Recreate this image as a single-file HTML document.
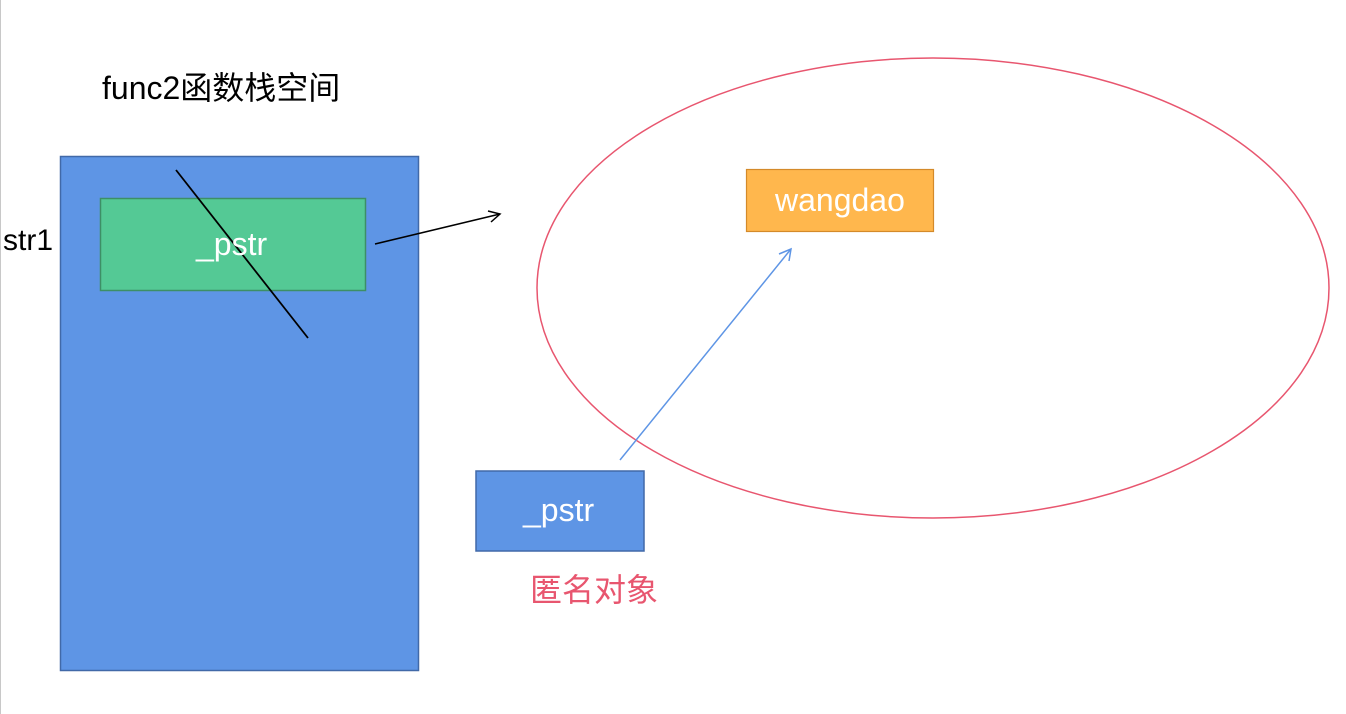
<!DOCTYPE html>
<html><head><meta charset="utf-8"><style>
body{margin:0;width:1346px;height:714px;background:#fff;overflow:hidden;position:relative;font-family:"Liberation Sans","Noto Sans CJK SC",sans-serif}
.t{position:absolute;white-space:nowrap}
</style></head><body>
<div style="position:absolute;left:0;top:0;width:1px;height:714px;background:#c8c8c8"></div>
<svg width="1346" height="714" style="position:absolute;left:0;top:0">
<rect x="60.5" y="156.5" width="358" height="514" fill="#5e95e5" stroke="#4169a8" stroke-width="1.5"/>
<rect x="100.5" y="198.5" width="265" height="92" fill="#54c995" stroke="#3d8f66" stroke-width="1.5"/>
<rect x="476" y="471" width="168" height="80" fill="#5e95e5" stroke="#4169a8" stroke-width="1.5"/>
<ellipse cx="933" cy="288" rx="396" ry="230" fill="none" stroke="#e8566f" stroke-width="1.5"/>
<rect x="746.5" y="169.5" width="187" height="62" fill="#ffb74d" stroke="#d48a2a" stroke-width="1.2"/>
<line x1="176" y1="170" x2="308" y2="338" stroke="#000" stroke-width="1.8"/>
<line x1="375" y1="244" x2="500" y2="214" stroke="#000" stroke-width="1.5"/>
<polyline points="488,211 500,214 491,222" fill="none" stroke="#000" stroke-width="1.5"/>
<line x1="620" y1="460" x2="791" y2="249" stroke="#5e95e5" stroke-width="1.5"/>
<polyline points="779,254 791,249 789,261" fill="none" stroke="#5e95e5" stroke-width="1.5"/>
</svg>
<div class="t" style="left:102px;top:63px;font-size:32px">func2函数栈空间</div>
<div class="t" style="left:3px;top:224px;font-size:30px">str1</div>
<div class="t" style="left:196px;top:226px;font-size:32px;color:#fff">_pstr</div>
<div class="t" style="left:523px;top:492px;font-size:32px;color:#fff">_pstr</div>
<div class="t" style="left:775px;top:182px;font-size:32px;color:#fff">wangdao</div>
<div class="t" style="left:530px;top:565px;font-size:32px;color:#e8566f">匿名对象</div>
</body></html>
